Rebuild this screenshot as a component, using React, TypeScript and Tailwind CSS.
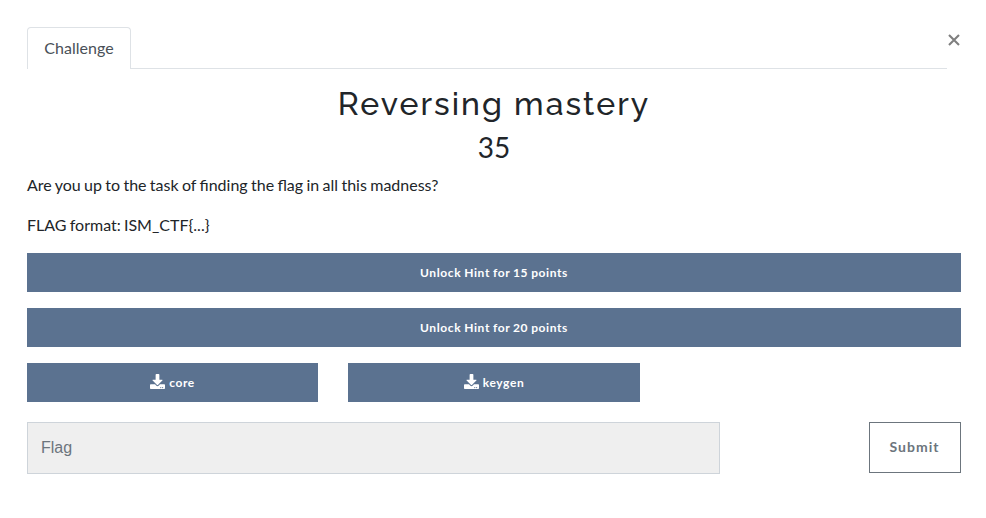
import { FaDownload } from "react-icons/fa";

export default function App() {
  const bar = "flex h-[39px] w-full items-center justify-center bg-[#5b7290] text-[12px] font-bold tracking-[0.6px] [word-spacing:-0.5px] text-white";
  return (
    <main className="h-[518px] w-[986px] bg-white pl-[27px] pr-[25px] pt-[27px] font-['Lato',sans-serif] text-[#212529]">
      <header className="flex h-[42px] items-start">
        <nav className="flex h-[42px] w-[920px] shrink-0 border-b border-[#dee2e6]">
          <button className="-mb-px h-[42px] w-[104px] rounded-t border border-b-0 border-[#dee2e6] bg-white pb-[2px] text-[16px] tracking-[0.05px] text-[#495057]">Challenge</button>
        </nav>
        <button aria-label="Close" className="ml-px mt-[7px] flex h-[12px] w-[12px] shrink-0 items-center justify-center">
          <svg width="12" height="12" viewBox="0 0 12 12" stroke="#7f7f7f" strokeWidth="2.1"><path d="M1 1 11 11M11 1 1 11" /></svg>
        </button>
      </header>
      <h2 className="mt-[15px] h-[40px] text-center font-['Raleway','Lato',sans-serif] text-[32px] font-medium leading-[40px] tracking-[2.03px]">Reversing mastery</h2>
      <h3 className="h-[46px] text-center text-[28px] leading-[46px]">35</h3>
      <p className="mt-[3px] h-[40px] text-[16px] leading-[24px] [word-spacing:-0.75px]">Are you up to the task of finding the flag in all this madness?</p>
      <p className="h-[40px] text-[16px] leading-[24px] [word-spacing:-0.85px]">FLAG format: ISM_CTF{"{...}"}</p>
      <button className={bar}>Unlock Hint for 15 points</button>
      <button className={bar + " mt-4"}>Unlock Hint for 20 points</button>
      <div className="mt-4 flex gap-[30px]">
        <div className="w-[291px]"><button className={bar}><FaDownload className="mr-1 mb-[3px] size-[15px]" />core</button></div>
        <div className="w-[292px]"><button className={bar}><FaDownload className="mr-1 mb-[3px] size-[15px]" />keygen</button></div>
      </div>
      <form className="mt-5 flex justify-between">
        <input placeholder="Flag" className="h-[52px] w-[693px] border border-[#ced4da] bg-[#efefef] px-[13px] font-['Liberation_Sans',sans-serif] text-[16px] placeholder:text-[#6c757d]" />
        <button type="button" className="h-[51px] w-[92px] border border-[#6c757d] pr-px pb-[2px] text-[14px] font-bold tracking-[1.05px] text-[#6c757d]">Submit</button>
      </form>
    </main>
  );
}
